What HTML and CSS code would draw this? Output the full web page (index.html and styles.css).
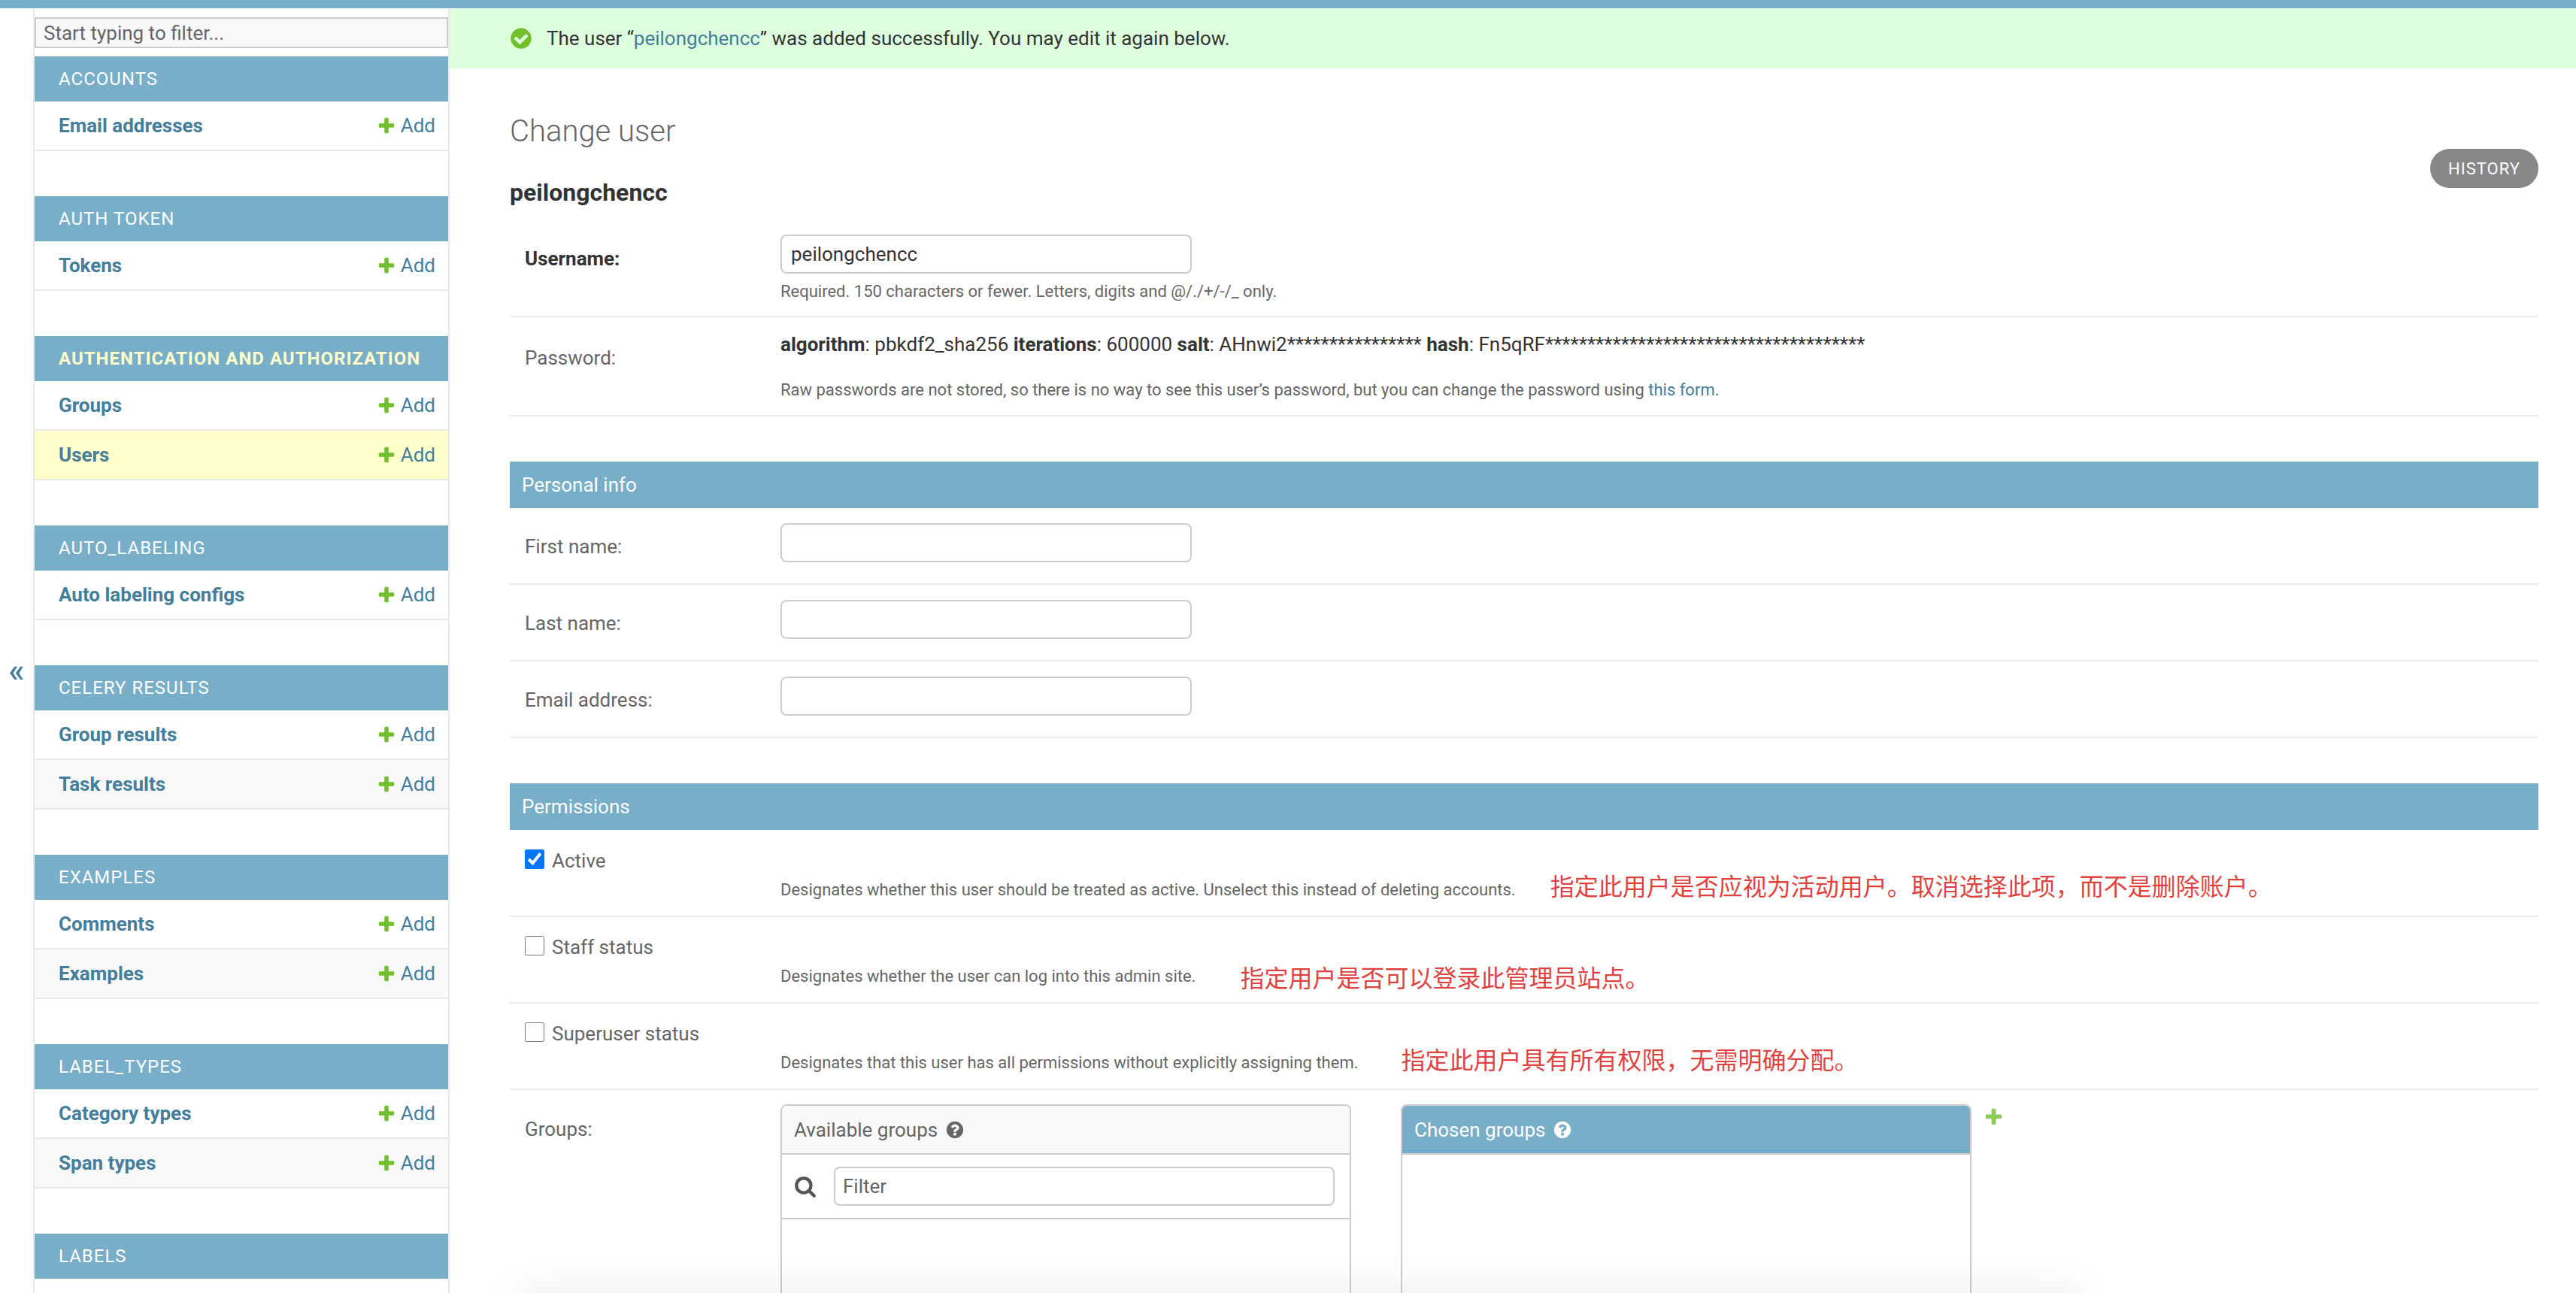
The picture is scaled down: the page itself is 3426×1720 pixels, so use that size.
FILE: index.html
```html
<!DOCTYPE html>
<html>
  <head>
    <meta name="viewport" content="width=device-width,initial-scale=1.0">
    <title>Change user</title>
    <link rel="stylesheet" href="styles.css">
  </head>
  <body>
    <svg class="icon-defs" xmlns="http://www.w3.org/2000/svg">
      <symbol id="icon-add" viewBox="0 0 1792 1792"><path d="M1600 796v192q0 40-28 68t-68 28h-416v416q0 40-28 68t-68 28h-192q-40 0-68-28t-28-68v-416h-416q-40 0-68-28t-28-68v-192q0-40 28-68t68-28h416v-416q0-40 28-68t68-28h192q40 0 68 28t28 68v416h416q40 0 68 28t28 68z"/></symbol>
      <symbol id="icon-yes" viewBox="0 0 1792 1792"><path d="M1412 734q0-28-18-46l-91-90q-19-19-45-19t-45 19l-408 407-226-226q-19-19-45-19t-45 19l-91 90q-18 18-18 46 0 27 18 45l362 362q19 19 45 19 27 0 46-19l543-543q18-18 18-45zm252 162q0 209-103 385.500t-279.500 279.500-385.500 103-385.500-103-279.500-279.500-103-385.500 103-385.500 279.500-279.500 385.500-103 385.500 103 279.500 279.500 103 385.500z"/></symbol>
      <symbol id="icon-help" viewBox="0 0 1792 1792"><path d="M1024 1376v-192q0-14-9-23t-23-9h-192q-14 0-23 9t-9 23v192q0 14 9 23t23 9h192q14 0 23-9t9-23zm256-672q0-88-55.500-163t-138.500-116-170-41q-243 0-371 213-15 24 8 42l132 100q7 6 19 6 16 0 25-12 53-68 86-92 34-24 86-24 48 0 85.500 26t37.500 59q0 38-20 61t-68 45q-63 28-115.500 86.500t-52.500 125.500v36q0 14 9 23t23 9h192q14 0 23-9t9-23q0-19 21.500-49.500t54.500-49.500q32-18 49-28.500t46-35 44.500-48 28-60.500 12.500-81zm384 192q0 209-103 385.500t-279.500 279.500-385.500 103-385.500-103-279.500-279.500-103-385.500 103-385.500 279.500-279.500 385.500-103 385.500 103 279.500 279.500 103 385.500z"/></symbol>
      <symbol id="icon-search" viewBox="0 0 1792 1792"><path d="M1216 832q0-185-131.500-316.500t-316.500-131.500-316.500 131.500-131.500 316.500 131.500 316.500 316.500 131.500 316.500-131.500 131.500-316.500zm512 832q0 52-38 90t-90 38q-54 0-90-38l-343-342q-179 124-399 124-143 0-273.500-55.500t-225-150-150-225-55.500-273.500 55.500-273.500 150-225 225-150 273.500-55.500 273.500 55.500 225 150 150 225 55.500 273.500q0 220-124 399l343 343q37 37 37 90z"/></symbol>
    </svg>

    <div class="topbar"></div>
    <div class="page">
      <div class="toggle"><a href="#">«</a></div>

      <nav class="sidebar">
        <input class="nav-filter" placeholder="Start typing to filter...">

        <div class="module">
          <div class="caption">Accounts</div>
          <div class="nav-row"><a class="nav-name" href="#">Email addresses</a><a class="nav-add" href="#"><svg><use href="#icon-add"/></svg>Add</a></div>
        </div>

        <div class="module">
          <div class="caption">Auth Token</div>
          <div class="nav-row"><a class="nav-name" href="#">Tokens</a><a class="nav-add" href="#"><svg><use href="#icon-add"/></svg>Add</a></div>
        </div>

        <div class="module">
          <div class="caption current">Authentication and Authorization</div>
          <div class="nav-row"><a class="nav-name" href="#">Groups</a><a class="nav-add" href="#"><svg><use href="#icon-add"/></svg>Add</a></div>
          <div class="nav-row selected"><a class="nav-name" href="#">Users</a><a class="nav-add" href="#"><svg><use href="#icon-add"/></svg>Add</a></div>
        </div>

        <div class="module">
          <div class="caption">Auto_Labeling</div>
          <div class="nav-row"><a class="nav-name" href="#">Auto labeling configs</a><a class="nav-add" href="#"><svg><use href="#icon-add"/></svg>Add</a></div>
        </div>

        <div class="module">
          <div class="caption">Celery Results</div>
          <div class="nav-row"><a class="nav-name" href="#">Group results</a><a class="nav-add" href="#"><svg><use href="#icon-add"/></svg>Add</a></div>
          <div class="nav-row even"><a class="nav-name" href="#">Task results</a><a class="nav-add" href="#"><svg><use href="#icon-add"/></svg>Add</a></div>
        </div>

        <div class="module">
          <div class="caption">Examples</div>
          <div class="nav-row"><a class="nav-name" href="#">Comments</a><a class="nav-add" href="#"><svg><use href="#icon-add"/></svg>Add</a></div>
          <div class="nav-row even"><a class="nav-name" href="#">Examples</a><a class="nav-add" href="#"><svg><use href="#icon-add"/></svg>Add</a></div>
        </div>

        <div class="module">
          <div class="caption">Label_Types</div>
          <div class="nav-row"><a class="nav-name" href="#">Category types</a><a class="nav-add" href="#"><svg><use href="#icon-add"/></svg>Add</a></div>
          <div class="nav-row even"><a class="nav-name" href="#">Span types</a><a class="nav-add" href="#"><svg><use href="#icon-add"/></svg>Add</a></div>
        </div>

        <div class="module">
          <div class="caption">Labels</div>
        </div>
      </nav>

      <main class="main">
        <div class="message">
          <svg class="message-icon"><use href="#icon-yes"/></svg>
          <span>The user “<a href="#">peilongchencc</a>” was added successfully. You may edit it again below.</span>
        </div>

        <div class="content">
          <h1>Change user</h1>
          <div class="subhead">
            <h2>peilongchencc</h2>
            <a class="history" href="#">History</a>
          </div>

          <div class="form-row first">
            <label class="field-label required">Username:</label>
            <div class="field">
              <input class="text-input" value="peilongchencc">
              <div class="help username-help">Required. 150 characters or fewer. Letters, digits and @/./+/-/_ only.</div>
            </div>
          </div>
          <div class="form-row password">
            <label class="field-label">Password:</label>
            <div class="field">
              <div class="hash"><strong>algorithm</strong>: pbkdf2_sha256 <strong>iterations</strong>: 600000 <strong>salt</strong>: AHnwi2**************** <strong>hash</strong>: Fn5qRF**************************************</div>
              <div class="help password-help">Raw passwords are not stored, so there is no way to see this user’s password, but you can change the password using <a href="#">this form</a>.</div>
            </div>
          </div>

          <h3 class="section-title">Personal info</h3>
          <div class="form-row text-row">
            <label class="field-label">First name:</label>
            <input class="text-input">
          </div>
          <div class="form-row text-row">
            <label class="field-label">Last name:</label>
            <input class="text-input">
          </div>
          <div class="form-row text-row">
            <label class="field-label">Email address:</label>
            <input class="text-input">
          </div>

          <h3 class="section-title">Permissions</h3>
          <div class="form-row check-row top">
            <label class="check-label"><input type="checkbox" checked>Active</label>
            <div class="help-line">
              <span class="help">Designates whether this user should be treated as active. Unselect this instead of deleting accounts.</span>
              <span class="note note-active">指定此用户是否应视为活动用户。取消选择此项，而不是删除账户。</span>
            </div>
          </div>
          <div class="form-row check-row">
            <label class="check-label"><input type="checkbox">Staff status</label>
            <div class="help-line">
              <span class="help">Designates whether the user can log into this admin site.</span>
              <span class="note note-staff">指定用户是否可以登录此管理员站点。</span>
            </div>
          </div>
          <div class="form-row check-row">
            <label class="check-label"><input type="checkbox">Superuser status</label>
            <div class="help-line">
              <span class="help">Designates that this user has all permissions without explicitly assigning them.</span>
              <span class="note note-super">指定此用户具有所有权限，无需明确分配。</span>
            </div>
          </div>

          <div class="groups-row">
            <label class="field-label groups-label">Groups:</label>
            <div class="selector">
              <div class="selector-box">
                <div class="selector-title">Available groups <svg><use href="#icon-help"/></svg></div>
                <div class="selector-filter">
                  <svg><use href="#icon-search"/></svg>
                  <input class="filter-input" placeholder="Filter">
                </div>
              </div>
              <div class="selector-box chosen">
                <div class="selector-title">Chosen groups <svg><use href="#icon-help"/></svg></div>
              </div>
              <a class="related-add" href="#"><svg><use href="#icon-add"/></svg></a>
            </div>
          </div>
        </div>
      </main>
    </div>
    <div class="bottom-shade"></div>
  </body>
</html>
```

FILE: styles.css
```css
html, body { margin: 0; height: 100%; overflow: hidden; }
body { font-family: Roboto, "Noto Sans CJK SC", sans-serif; font-size: 26px; color: #333; background: #fff; }
a { color: #447e9b; text-decoration: none; }
.icon-defs { display: none; }

.topbar { height: 11px; background: #79aec8; }
.page { display: flex; height: 1709px; }

.toggle { width: 46px; flex: none; display: flex; align-items: center; justify-content: center; padding-top: 53px; box-sizing: border-box; border-right: 2px solid #eaeaea; font-size: 44px; font-weight: 500; }

.sidebar { width: 550px; flex: none; border-right: 2px solid #eaeaea; }
.nav-filter { display: block; width: 100%; height: 41px; margin: 12px 0 11px; padding: 0 10px; box-sizing: border-box; background: #f8f8f8; border: 2px solid #ccc; font: 26px Roboto, sans-serif; color: #333; outline: none; }
.nav-filter::placeholder { color: #666; }
.module { margin-bottom: 60px; }
.caption { height: 60px; line-height: 60px; padding-left: 32px; background: #79aec8; color: #fff; font-size: 24px; letter-spacing: 1px; text-transform: uppercase; }
.caption.current { color: #ffc; font-weight: 700; }
.nav-row { display: flex; justify-content: space-between; align-items: center; height: 64px; padding: 0 17px 0 32px; border-bottom: 2px solid #eaeaea; }
.nav-row.even { background: #f8f8f8; }
.nav-row.selected { background: #ffc; }
.nav-name { font-weight: 700; }
.nav-add { display: flex; align-items: center; gap: 6px; }
.nav-add svg { width: 26px; height: 26px; fill: #70bf2b; }

.main { flex: 1; min-width: 0; }
.message { display: flex; align-items: center; gap: 18px; height: 80px; padding-left: 79px; background: #dfd; }
.message-icon { width: 32px; height: 32px; fill: #70bf2b; }
.content { padding: 0 50px 0 80px; }
h1 { margin: 59px 0 0; font-size: 40px; line-height: 50px; font-weight: 300; color: #666; }
.subhead { display: flex; justify-content: space-between; height: 56px; margin-top: 36px; }
h2 { margin: 0; font-size: 32px; line-height: 40px; font-weight: 700; }
.history { height: 52px; line-height: 54px; margin-top: -38px; padding: 0 24px; background: #888; color: #fff; border-radius: 26px; font-size: 22px; letter-spacing: 1px; text-transform: uppercase; }

.form-row { display: flex; padding: 20px 20px 28px; border-bottom: 2px solid #eaeaea; }
.form-row.first { padding-bottom: 17px; }
.form-row.password { padding: 18px 20px; }
.field-label { display: block; width: 340px; flex: none; color: #666; line-height: 36px; }
.field-label.required { color: #333; font-weight: 700; padding-top: 14px; }
.password .field-label { padding-top: 18px; }
.text-row .field-label { padding-top: 13px; }
.text-input { display: block; width: 547px; height: 52px; padding: 0 12px; box-sizing: border-box; border: 2px solid #ccc; border-radius: 8px; font: 26px Roboto, sans-serif; color: #333; outline: none; }
.help { font-size: 22px; line-height: 30px; color: #666; }
.username-help { margin-top: 9px; }
.hash { line-height: 36px; }
.password-help { margin-top: 28px; }

.section-title { height: 62px; line-height: 62px; margin: 60px 0 0; padding-left: 16px; background: #79aec8; color: #fff; font-size: 26px; font-weight: 400; }

.form-row.check-row { display: block; padding: 25px 20px 19px; }
.form-row.check-row.top { padding-top: 26px; }
.check-label { display: flex; align-items: flex-start; height: 26px; line-height: 30px; color: #666; }
.check-label input { width: 26px; height: 26px; margin: 0 10px 0 0; }
.help-line { display: flex; height: 30px; margin: 13px 0 0 340px; }
.note { font-size: 32px; line-height: 30px; color: #e0433f; }
.note-active { margin: -4px 0 0 46px; }
.note-staff { margin: 3px 0 0 59px; }
.note-super { margin: -3px 0 0 57px; }

.groups-row { display: flex; padding: 19px 20px 0; }
.groups-label { padding-top: 15px; }
.selector { display: flex; align-items: flex-start; }
.selector-box { width: 759px; height: 500px; box-sizing: border-box; border: 2px solid #ccc; border-radius: 8px 8px 0 0; }
.selector-box.chosen { margin-left: 66px; }
.selector-title { display: flex; align-items: center; gap: 10px; height: 63px; padding-left: 16px; background: #f8f8f8; border-bottom: 2px solid #ccc; border-radius: 6px 6px 0 0; color: #666; }
.selector-title svg { width: 26px; height: 26px; fill: #666; }
.chosen .selector-title { background: #79aec8; color: #fff; }
.chosen .selector-title svg { fill: #fff; }
.selector-filter { display: flex; align-items: center; gap: 23px; height: 84px; padding: 0 20px 0 16px; border-bottom: 2px solid #ccc; }
.selector-filter svg { width: 30px; height: 30px; flex: none; fill: #555; }
.filter-input { flex: 1; min-width: 0; height: 52px; padding: 0 10px; box-sizing: border-box; border: 2px solid #ccc; border-radius: 8px; font: 26px Roboto, sans-serif; outline: none; }
.filter-input::placeholder { color: #666; }
.related-add { margin: 3px 0 0 16px; opacity: 0.8; }
.related-add svg { display: block; width: 27px; height: 27px; fill: #70bf2b; }

.bottom-shade { position: absolute; left: 700px; bottom: -24px; width: 2060px; height: 20px; box-shadow: 0 0 50px 10px rgba(0, 0, 0, 0.08); pointer-events: none; }
```
